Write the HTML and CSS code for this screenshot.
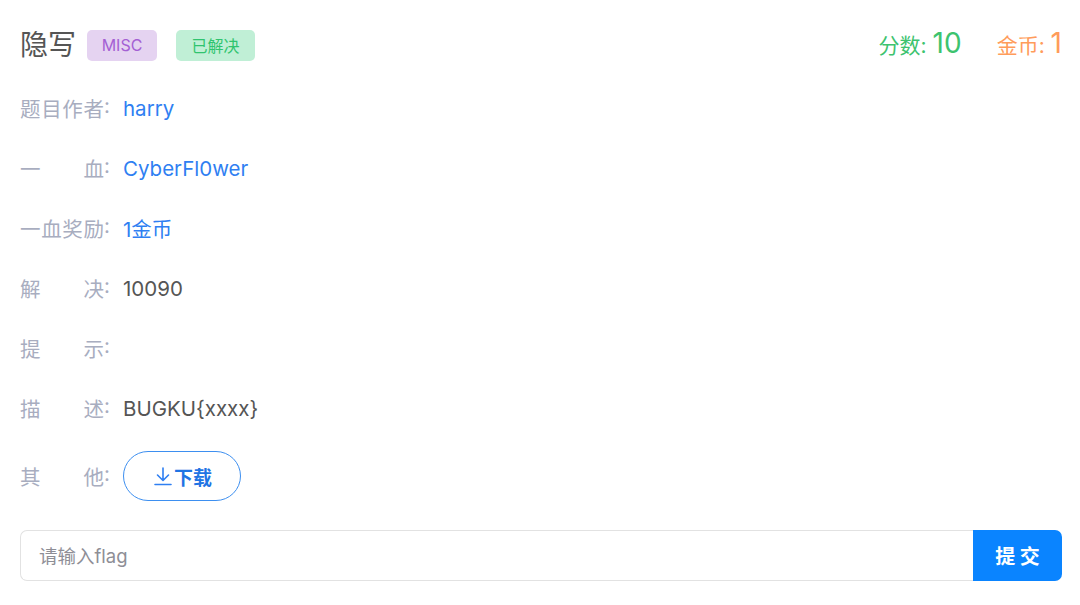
FILE: index.html
```html
<!DOCTYPE html>
<html lang="zh">
<head>
<meta charset="utf-8">
<link rel="stylesheet" href="styles.css">
</head>
<body>
<div class="page">
  <header class="head">
    <div class="title-wrap">
      <h1 class="title">隐写</h1>
      <span class="badge badge-misc">MISC</span>
      <span class="badge badge-solved">已解决</span>
    </div>
    <div class="stats">
      <span class="stat stat-score">分数: <b>10</b></span>
      <span class="stat stat-coin">金币: <b>1</b></span>
    </div>
  </header>
  <div class="rows">
    <div class="row"><span class="label"><span class="lt">题目作者</span>:</span><span class="val blue">harry</span></div>
    <div class="row"><span class="label"><span class="lt">一血</span>:</span><span class="val blue">CyberFl0wer</span></div>
    <div class="row"><span class="label"><span class="lt">一血奖励</span>:</span><span class="val blue">1金币</span></div>
    <div class="row"><span class="label"><span class="lt">解决</span>:</span><span class="val">10090</span></div>
    <div class="row"><span class="label"><span class="lt">提示</span>:</span><span class="val"></span></div>
    <div class="row"><span class="label"><span class="lt">描述</span>:</span><span class="val">BUGKU{xxxx}</span></div>
    <div class="row row-btn"><span class="label"><span class="lt">其他</span>:</span><button class="dl" type="button"><svg class="dl-icon" viewBox="0 0 18 20" width="18" height="20"><path d="M9 2v12M3.5 9l5.5 5.5L14.5 9M1 18.5h16" fill="none" stroke="currentColor" stroke-width="1.6" stroke-linecap="round" stroke-linejoin="round"/></svg>下载</button></div>
  </div>
  <form class="flag">
    <input class="flag-input" type="text" placeholder="请输入flag">
    <button class="submit" type="button">提 交</button>
  </form>
</div>
</body>
</html>
```
FILE: styles.css
```css
* { box-sizing: border-box; }
html, body { margin: 0; padding: 0; background: #fff; }
body {
  font-family: Inter, "Noto Sans CJK SC", "Noto Sans", sans-serif;
  width: 1080px;
  height: 605px;
  overflow: hidden;
}
.page { padding: 24px 18px 0 20px; }
.head {
  display: flex;
  justify-content: space-between;
  align-items: center;
  height: 42px;
}
.title-wrap { display: flex; align-items: center; }
.title {
  margin: 0;
  font-size: 28px;
  font-weight: 400;
  color: #555;
  line-height: 1;
}
.badge {
  display: inline-flex;
  align-items: center;
  justify-content: center;
  height: 31px;
  border-radius: 5px;
  font-size: 16px;
}
.badge-misc { margin-left: 11px; width: 70px; background: #e5d3f1; color: #a460d4; }
.badge-solved { margin-left: 19px; width: 79px; background: #c0efd6; color: #30c46f; }
.stats { display: flex; align-items: baseline; gap: 35px; margin-top: -4px; }
.stat { font-size: 21px; }
.stat b { font-weight: 400; font-size: 28px; }
.stat-score { color: #3dc36f; }
.stat-coin { color: #ff9c5b; }
.rows { margin-top: 12px; }
.row {
  display: flex;
  align-items: center;
  height: 60px;
  font-size: 20.5px;
}
.row-btn { height: 76px; }
.label {
  display: flex;
  color: #a8adbf;
  width: 103px;
  flex: none;
}
.lt {
  width: 84px;
  text-align: justify;
  text-align-last: justify;
}
.val { color: #555; }
.blue { color: #2f7ff2; }
.dl {
  width: 118px;
  height: 50px;
  border: 1px solid #3d8ff0;
  border-radius: 25px;
  background: #fff;
  color: #1f74e4;
  font-family: inherit;
  font-size: 19px;
  font-weight: 700;
  display: flex;
  align-items: center;
  justify-content: center;
  padding: 0 0 0 2px;
}
.dl-icon { margin-right: 2px; color: #2f7ff2; }
.flag {
  display: flex;
  margin-top: 16px;
  height: 51px;
}
.flag-input {
  flex: 1;
  border: 1px solid #e2e2e2;
  border-right: none;
  border-radius: 7px 0 0 7px;
  padding: 0 18px;
  font-family: inherit;
  font-size: 18.5px;
  color: #555;
  outline: none;
}
.flag-input::placeholder { color: #8e8e96; }
.submit {
  width: 89px;
  border: none;
  background: #0a84ff;
  color: #fff;
  font-family: inherit;
  font-size: 20px;
  font-weight: 700;
  border-radius: 0 7px 7px 0;
  padding: 0;
}
```
